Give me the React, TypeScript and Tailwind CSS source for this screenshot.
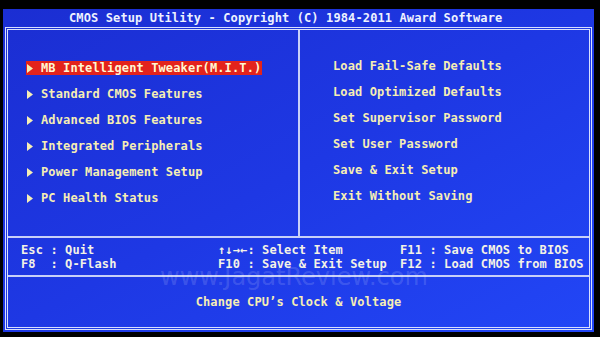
import React from "react";

const Arrow = () => (
  <svg width="6" height="9" viewBox="0 0 6 9" className="shrink-0">
    <polygon points="0,0 6,4.5 0,9" fill="#f6eeb4" />
  </svg>
);

const leftItems = [
  "MB Intelligent Tweaker(M.I.T.)",
  "Standard CMOS Features",
  "Advanced BIOS Features",
  "Integrated Peripherals",
  "Power Management Setup",
  "PC Health Status",
];

const rightItems = [
  "Load Fail-Safe Defaults",
  "Load Optimized Defaults",
  "Set Supervisor Password",
  "Set User Password",
  "Save & Exit Setup",
  "Exit Without Saving",
];

export default function App() {
  return (
    <div className="relative w-[600px] h-[337px] bg-black pt-[9px] pl-[3px] pr-[6px] pb-[5px] overflow-hidden font-['DejaVu_Sans_Mono','Liberation_Mono',monospace] font-bold text-[12px] tracking-[0.12px] whitespace-pre">
      <div className="flex flex-col h-full bg-linear-to-br from-[#1b2ed2] via-[#1e38e4] to-[#2246f6]">
        <div className="h-[18px] flex items-center pl-[66px] text-[#eef2ff] leading-none">
          CMOS Setup Utility - Copyright (C) 1984-2011 Award Software
        </div>
        <div className="mx-[2px] mb-[2px] flex-1 flex flex-col border-[3px] border-double border-[#d8e0ff]">
          <div className="h-[208px] flex border-b-2 border-[#c8d0f8]">
            <div className="w-[292px] pt-[25px] border-r-2 border-[#c8d0f8] flex flex-col">
              {leftItems.map((t, i) => (
                <div key={t} className="h-[26px] flex items-center">
                  <div
                    className={
                      "ml-[18px] h-[14px] flex items-center leading-none " +
                      (i === 0 ? "bg-[#e3231c] text-[#fff6d2] pr-[1px]" : "text-[#f6eeb4]")
                    }
                  >
                    <span className="ml-[1px]">
                      <Arrow />
                    </span>
                    <span className="ml-[8px]">{t}</span>
                  </div>
                </div>
              ))}
            </div>
            <div className="flex-1 pt-[23px] flex flex-col">
              {rightItems.map((t) => (
                <div key={t} className="h-[26px] flex items-center pl-[33px] text-[#f6eeb4] leading-none">
                  {t}
                </div>
              ))}
            </div>
          </div>
          <div className="h-[39px] pt-[5px] border-b-2 border-[#c8d0f8] flex text-[#f4f2e6] leading-[14px]">
            <div className="w-[210px] pl-[13px] flex flex-col">
              <div className="h-[14px]">Esc : Quit</div>
              <div className="h-[14px]">F8  : Q-Flash</div>
            </div>
            <div className="w-[182px] flex flex-col">
              <div className="h-[14px]">↑↓→←: Select Item</div>
              <div className="h-[14px]">F10 : Save & Exit Setup</div>
            </div>
            <div className="flex-1 flex flex-col">
              <div className="h-[14px]">F11 : Save CMOS to BIOS</div>
              <div className="h-[14px]">F12 : Load CMOS from BIOS</div>
            </div>
          </div>
          <div className="flex-1 flex items-center justify-center text-[#f6eeb4] leading-none">
            Change CPU’s Clock & Voltage
          </div>
        </div>
      </div>
      <div className="absolute left-[160px] top-[265px] font-['DejaVu_Sans',sans-serif] font-normal text-[24px] leading-none tracking-normal text-white/15">
        www.JagatReview.com
      </div>
    </div>
  );
}
